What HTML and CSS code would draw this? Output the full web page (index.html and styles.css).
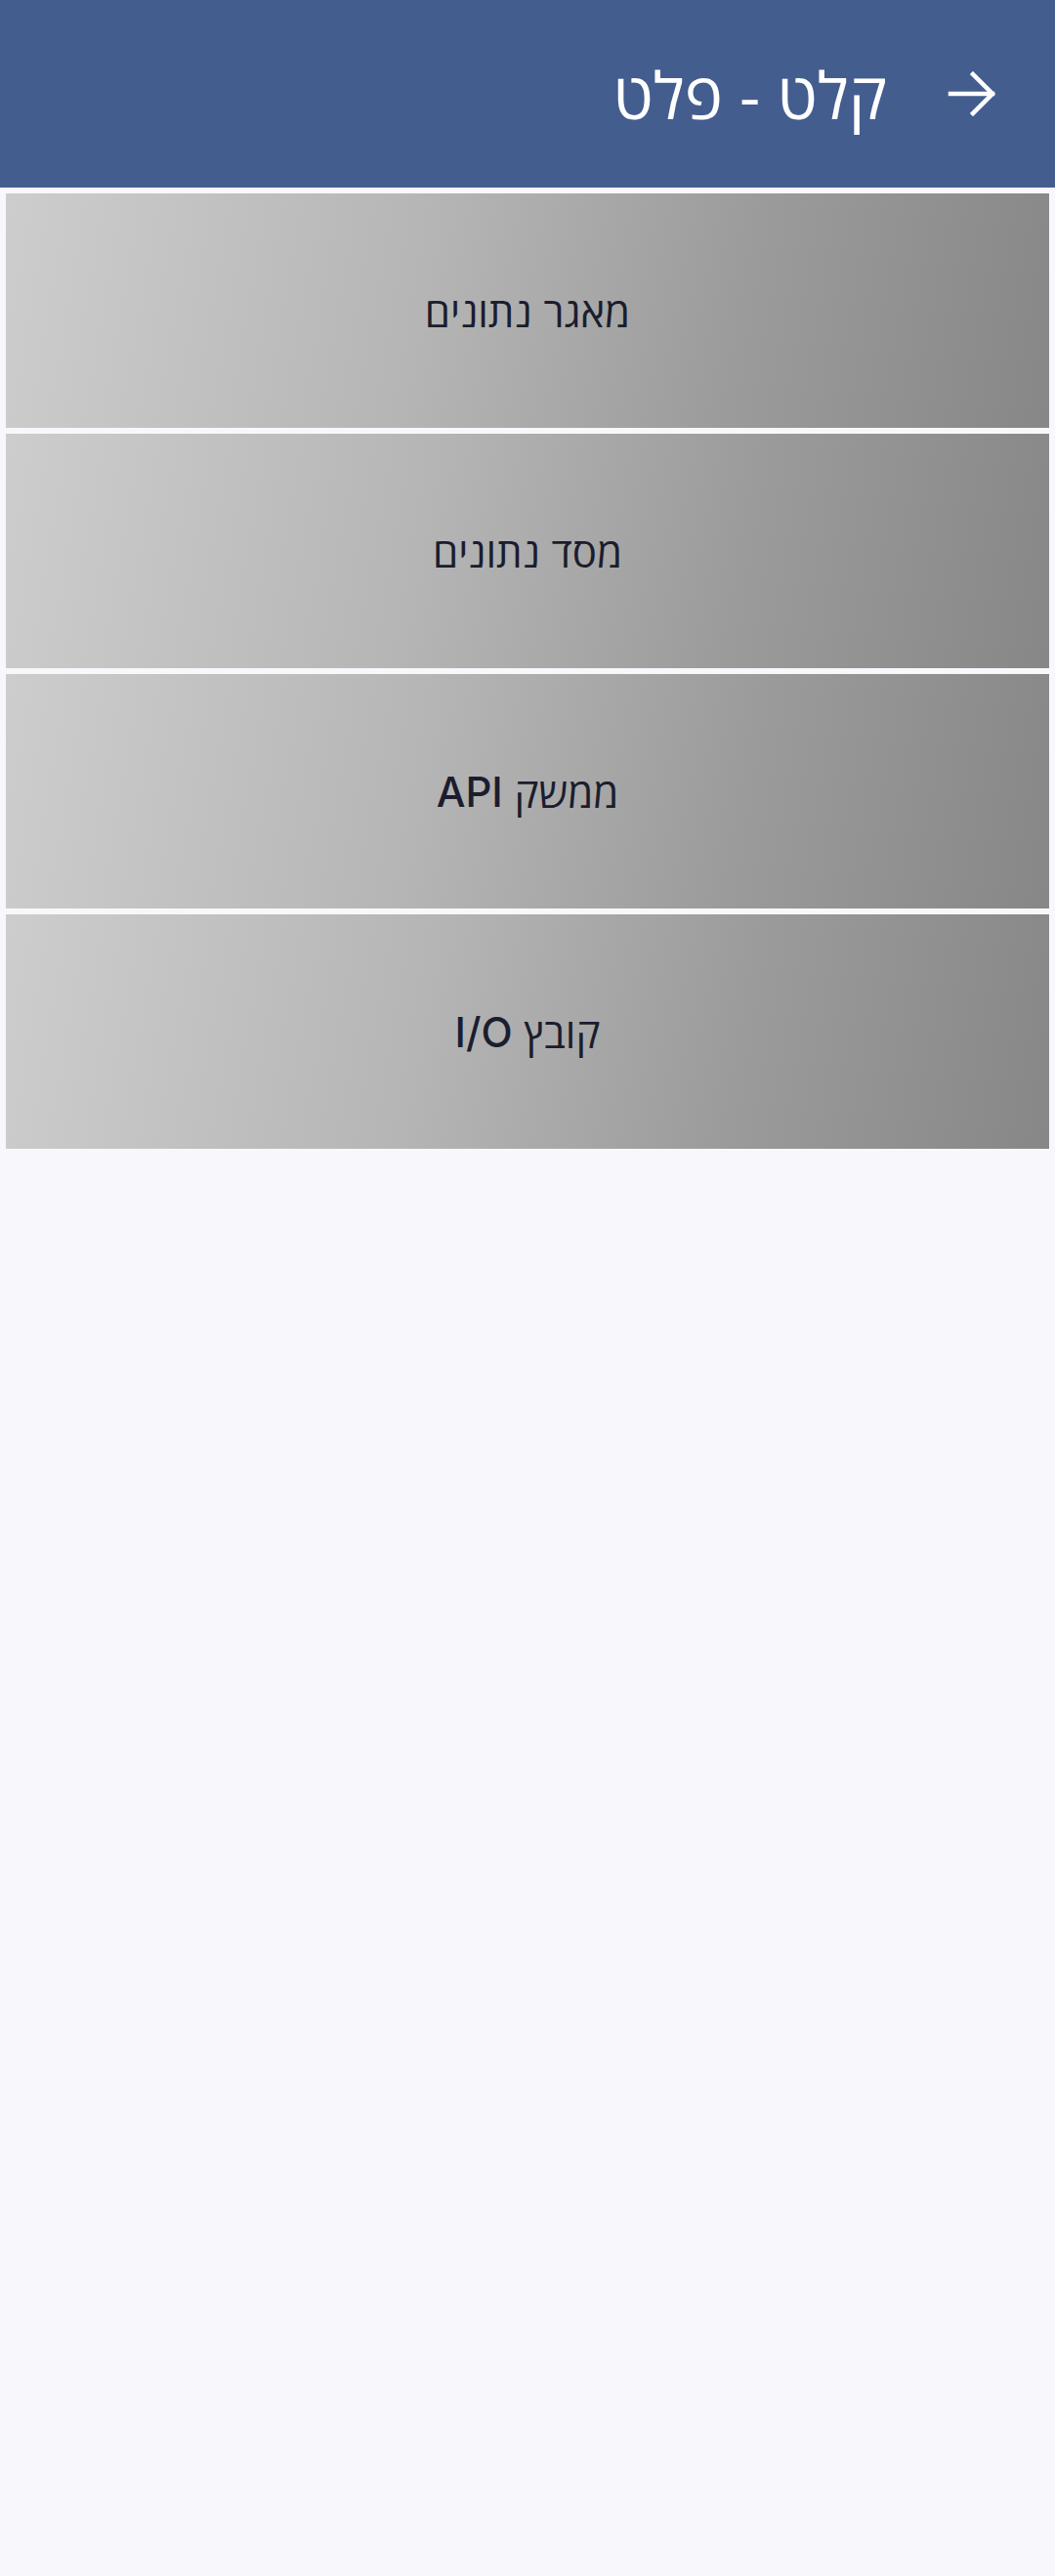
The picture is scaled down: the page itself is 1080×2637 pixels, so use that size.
FILE: index.html
```html
<!DOCTYPE html>
<html lang="he" dir="rtl">
<head>
<meta charset="utf-8">
<link rel="stylesheet" href="styles.css">
</head>
<body>
<header class="topbar">
  <button class="back" aria-label="חזרה">
    <svg viewBox="0 0 50 50" width="50" height="50"><path d="M3 25H46M26 5L46 25L26 45" fill="none" stroke="#fff" stroke-width="4.5" stroke-linecap="square"/></svg>
  </button>
  <h1 class="title">קלט - פלט</h1>
</header>
<main class="list">
  <div class="card">מאגר נתונים</div>
  <div class="card">מסד נתונים</div>
  <div class="card">ממשק <span class="latin">API</span></div>
  <div class="card">קובץ <span class="latin">I/O</span></div>
</main>
</body>
</html>
```
FILE: styles.css
```css
html, body {
  margin: 0;
  padding: 0;
}
body {
  background: #f8f8fc;
  font-family: "Inter", "Open Sans", "DejaVu Sans", sans-serif;
  width: 1080px;
  min-height: 2637px;
}
.topbar {
  height: 192px;
  background: #435d8f;
  display: flex;
  align-items: center;
  padding-right: 60px;
  box-sizing: border-box;
  gap: 62px;
}
.back {
  background: none;
  border: 0;
  padding: 0;
  width: 50px;
  height: 50px;
  display: flex;
}
.title {
  margin: 0;
  color: #fff;
  font-family: "Open Sans", sans-serif;
  font-weight: 400;
  font-size: 66px;
  line-height: 1;
}
.list {
  display: flex;
  flex-direction: column;
  gap: 6px;
  padding: 6px;
}
.card {
  height: 240px;
  display: flex;
  align-items: center;
  justify-content: center;
  gap: 0.28em;
  background: linear-gradient(100deg, #cdcdcd 0%, #b5b5b5 40%, #9b9b9b 70%, #878787 100%);
  color: #1b1d2e;
  font-size: 42px;
}
.latin {
  font-weight: 500;
}
```
